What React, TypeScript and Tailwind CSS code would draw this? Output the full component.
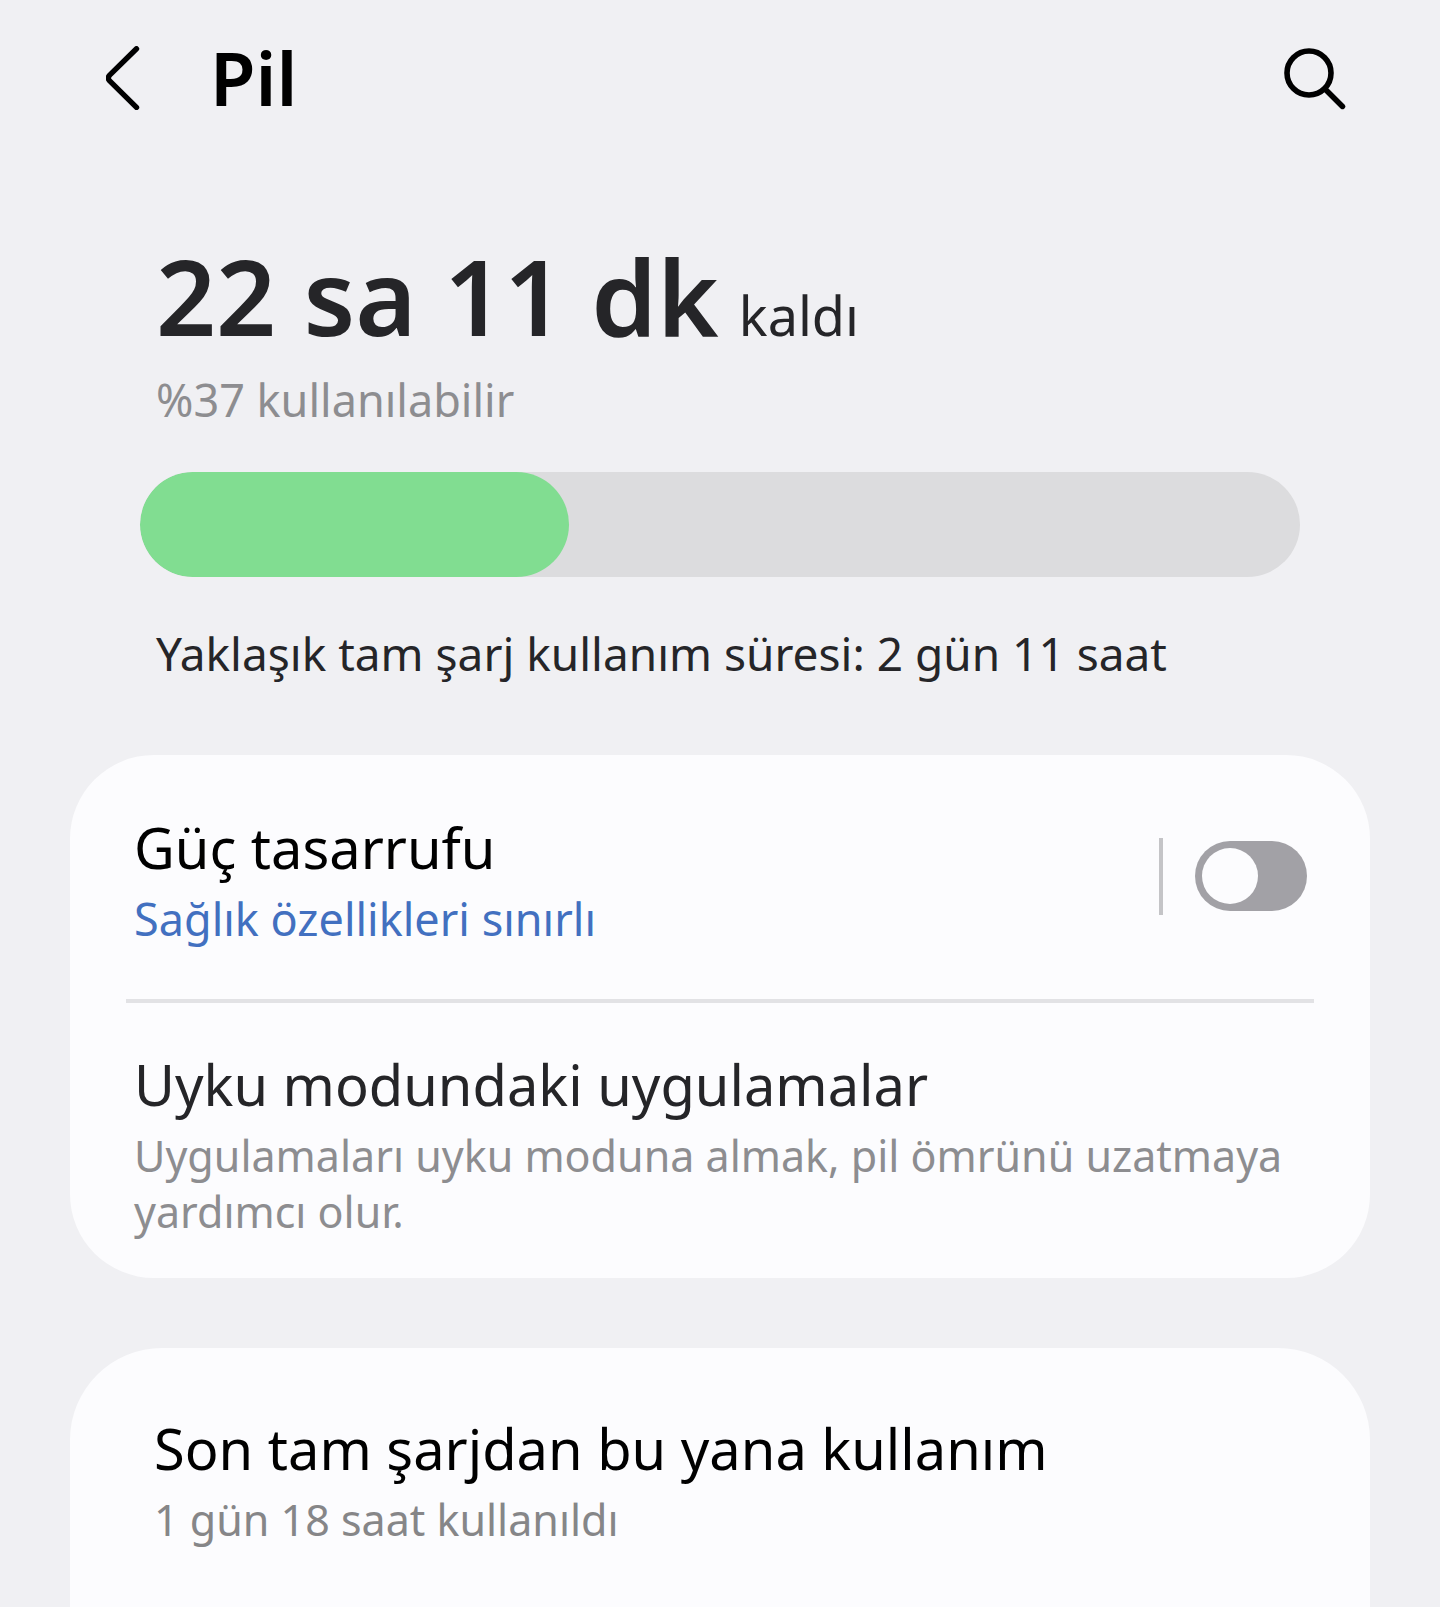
import { useState } from 'react';

const BATTERY_LEVEL = 37;

function BackIcon() {
  return (
    <svg width="34" height="64" viewBox="0 0 34 64" fill="none" aria-hidden="true">
      <path
        d="M30.5 2.8 L3.4 29.4 Q1.2 32 3.4 34.6 L30.5 61.4"
        stroke="currentColor"
        strokeWidth="5.4"
        strokeLinecap="round"
        strokeLinejoin="round"
      />
    </svg>
  );
}

function SearchIcon() {
  return (
    <svg width="64" height="64" viewBox="0 0 64 64" fill="none" aria-hidden="true">
      <circle cx="26" cy="27" r="22" stroke="currentColor" strokeWidth="5.6" />
      <path d="M42.5 43.5 L59.5 60.5" stroke="currentColor" strokeWidth="5.4" strokeLinecap="round" />
    </svg>
  );
}

function ItemText({ title, titleClass, note, noteClass }: {
  title: string;
  titleClass: string;
  note: string;
  noteClass: string;
}) {
  return (
    <div className="min-w-0 flex-1">
      <h2 className={`text-[56px] leading-[72px] ${titleClass}`}>{title}</h2>
      <p className={`mt-2 leading-[56px] ${noteClass}`}>{note}</p>
    </div>
  );
}

export default function App() {
  const [powerSaving, setPowerSaving] = useState(false);

  return (
    <div className="flex min-h-screen flex-col bg-[#f0f0f3] font-['Noto_Sans',sans-serif] text-[#252528]">
      <header className="flex h-[156px] items-center pr-[93px] pl-[106px] text-black">
        <button type="button" aria-label="Geri">
          <BackIcon />
        </button>
        <h1 className="ml-[70px] flex-1 text-[74px] leading-[80px] font-semibold">Pil</h1>
        <button type="button" aria-label="Ara">
          <SearchIcon />
        </button>
      </header>

      <main className="flex flex-1 flex-col px-[70px] pt-[76px]">
        <section className="px-[70px]">
          <p className="flex items-baseline gap-5 px-4 text-[105px] leading-[128px] font-semibold">
            22 sa 11 dk <span className="text-[54px] leading-none font-normal">kaldı</span>
          </p>
          <p className="mt-3 px-4 text-[45px] leading-[56px] text-[#8d8d90]">
            %{BATTERY_LEVEL} kullanılabilir
          </p>
          <div
            role="progressbar"
            aria-label="Pil düzeyi"
            aria-valuenow={BATTERY_LEVEL}
            aria-valuemin={0}
            aria-valuemax={100}
            className="mt-11 h-[105px] overflow-hidden rounded-full bg-[#dcdcde]"
          >
            <div className="h-full rounded-full bg-[#81dd91]" style={{ width: `${BATTERY_LEVEL}%` }} />
          </div>
          <p className="mt-11 px-4 text-[46px] leading-[64px]">
            Yaklaşık tam şarj kullanım süresi: 2 gün 11 saat
          </p>
        </section>

        <section className="mt-[70px] rounded-[84px] bg-[#fcfcfe] px-14">
          <div className="flex items-center border-b-4 border-[#e2e2e5] pt-14 pr-[7px] pb-[52px] pl-2">
            <ItemText
              title="Güç tasarrufu"
              titleClass="text-black"
              note="Sağlık özellikleri sınırlı"
              noteClass="text-[45px] text-[#4270c0]"
            />
            <div className="flex items-center gap-8 pb-[6px]">
              <div className="h-[77px] w-1 bg-[#c4c4c7]" />
              <input
                type="checkbox"
                role="switch"
                aria-label="Güç tasarrufu"
                checked={powerSaving}
                onChange={e => setPowerSaving(e.target.checked)}
                className="h-[70px] w-28 shrink-0 cursor-pointer appearance-none rounded-full bg-[#a2a1a6] p-[7px] before:block before:size-14 before:rounded-full before:bg-[#fcfcfe] before:transition-transform checked:bg-[#4270c0] checked:before:translate-x-[42px]"
              />
            </div>
          </div>
          <div className="px-2 pt-[45px] pb-[38px]">
            <ItemText
              title="Uyku modundaki uygulamalar"
              titleClass=""
              note="Uygulamaları uyku moduna almak, pil ömrünü uzatmaya yardımcı olur."
              noteClass="text-[43px] text-[#8d8d90]"
            />
          </div>
        </section>

        <section className="mt-[70px] flex-1 rounded-t-[92px] bg-[#fcfcfe] px-[84px] pt-16 pb-[58px]">
          <ItemText
            title="Son tam şarjdan bu yana kullanım"
            titleClass="text-black"
            note="1 gün 18 saat kullanıldı"
            noteClass="text-[43px] text-[#868688]"
          />
        </section>
      </main>
    </div>
  );
}
